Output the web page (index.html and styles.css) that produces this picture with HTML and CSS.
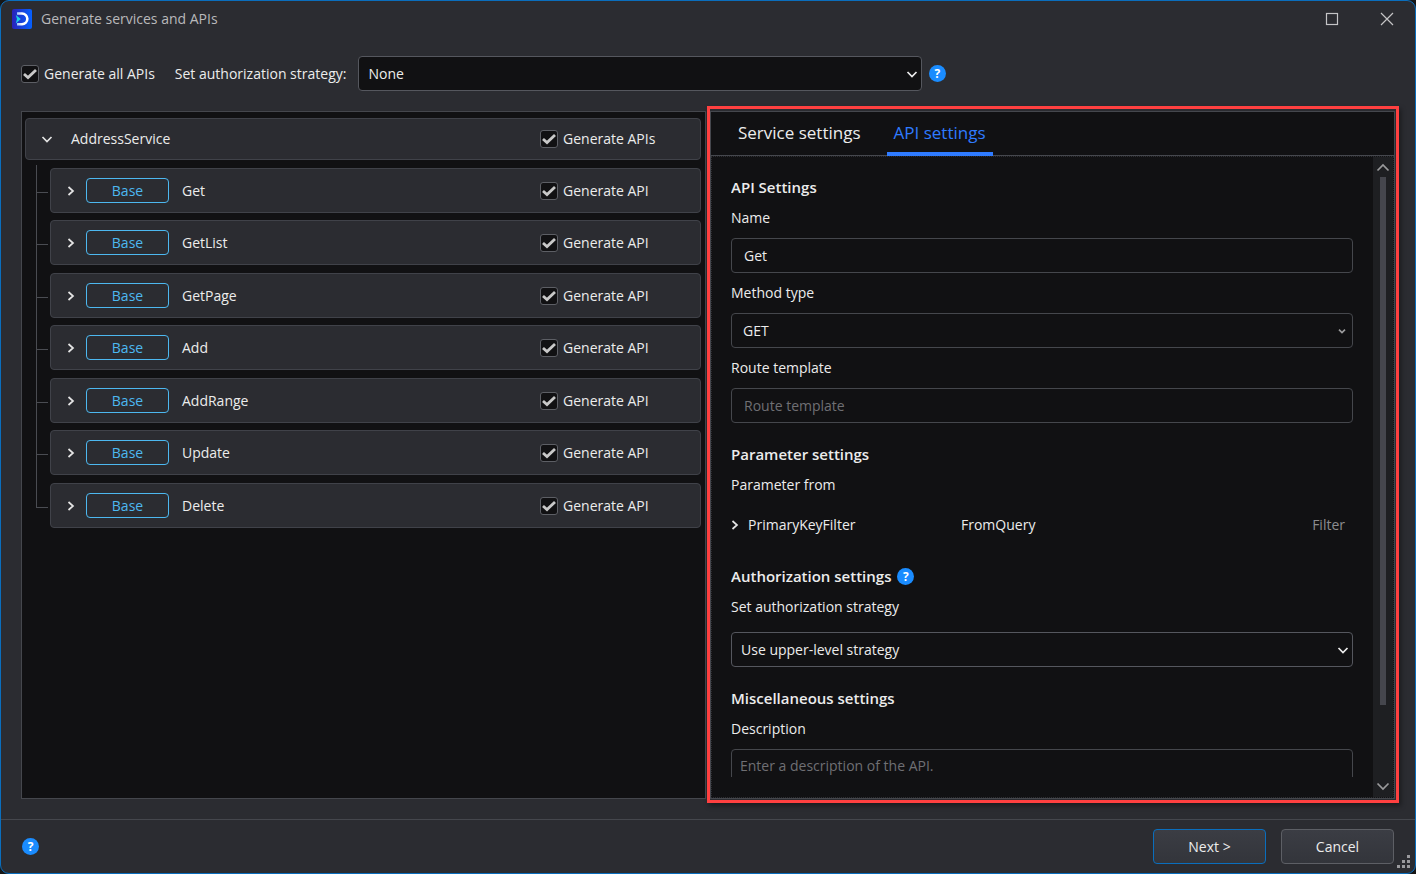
FILE: index.html
```html
<!DOCTYPE html>
<html lang="en">
<head>
    <meta charset="UTF-8">
    <title>Generate services and APIs</title>
    <meta name="viewport" content="width=device-width, initial-scale=1.0">
    <link rel="stylesheet" href="styles.css">
</head>
<body>
    <div class="window">
        <header class="titlebar">
            <svg class="logo" viewBox="0 0 20 20" fill="none">
                <defs>
                    <linearGradient id="logoBg" x1="0" y1="0" x2="20" y2="0" gradientUnits="userSpaceOnUse">
                        <stop offset="0%" stop-color="#2a22b8"/>
                        <stop offset="100%" stop-color="#0560ff"/>
                    </linearGradient>
                    <linearGradient id="logoD" x1="4" y1="0" x2="17" y2="0" gradientUnits="userSpaceOnUse">
                        <stop offset="0%" stop-color="#8fb8ff"/>
                        <stop offset="50%" stop-color="#ffffff"/>
                    </linearGradient>
                </defs>
                <rect width="20" height="20" rx="2" fill="url(#logoBg)"/>
                <path d="M5 4.500H10A5.300 5.300 0 0 1 10 15.200H5" stroke="url(#logoD)" stroke-width="2.600"/>
                <path d="M3.800 6L8.800 10L3.800 14.500L5 10Z" fill="#19d3e6"/>
            </svg>
            <h1 class="title">Generate services and APIs</h1>
            <div class="window-buttons">
                <button class="window-button" aria-label="Maximize">
                    <svg width="14" height="14" viewBox="0 0 14 14"><rect x="1.500" y="1.500" width="11" height="11" fill="none" stroke="#c4c4c6" stroke-width="1.200"/></svg>
                </button>
                <button class="window-button" aria-label="Close">
                    <svg width="14" height="14" viewBox="0 0 14 14"><path d="M1 1L13 13M13 1L1 13" stroke="#c4c4c6" stroke-width="1.200"/></svg>
                </button>
            </div>
        </header>

        <div class="toolbar">
            <label class="check"><input type="checkbox" checked>Generate all APIs</label>
            <label class="toolbar-label" for="strategy">Set authorization strategy:</label>
            <select id="strategy" class="field select toolbar-select">
                <option>None</option>
            </select>
            <button class="help" aria-label="Help">?</button>
        </div>

        <main class="main">
            <section class="tree">
                <div class="row service">
                    <button class="chevron" aria-label="Collapse">
                        <svg width="12" height="12" viewBox="0 0 12 12"><path d="M1.500 4L6 8.500L10.500 4"/></svg>
                    </button>
                    <span class="row-name">AddressService</span>
                    <label class="check"><input type="checkbox" checked>Generate APIs</label>
                </div>
                <ul class="methods">
                    <li class="row">
                        <button class="chevron" aria-label="Expand"><svg width="12" height="12" viewBox="0 0 12 12"><path d="M3.500 2L8 6L3.500 10"/></svg></button>
                        <span class="badge">Base</span>
                        <span class="row-name">Get</span>
                        <label class="check"><input type="checkbox" checked>Generate API</label>
                    </li>
                    <li class="row">
                        <button class="chevron" aria-label="Expand"><svg width="12" height="12" viewBox="0 0 12 12"><path d="M3.500 2L8 6L3.500 10"/></svg></button>
                        <span class="badge">Base</span>
                        <span class="row-name">GetList</span>
                        <label class="check"><input type="checkbox" checked>Generate API</label>
                    </li>
                    <li class="row">
                        <button class="chevron" aria-label="Expand"><svg width="12" height="12" viewBox="0 0 12 12"><path d="M3.500 2L8 6L3.500 10"/></svg></button>
                        <span class="badge">Base</span>
                        <span class="row-name">GetPage</span>
                        <label class="check"><input type="checkbox" checked>Generate API</label>
                    </li>
                    <li class="row">
                        <button class="chevron" aria-label="Expand"><svg width="12" height="12" viewBox="0 0 12 12"><path d="M3.500 2L8 6L3.500 10"/></svg></button>
                        <span class="badge">Base</span>
                        <span class="row-name">Add</span>
                        <label class="check"><input type="checkbox" checked>Generate API</label>
                    </li>
                    <li class="row">
                        <button class="chevron" aria-label="Expand"><svg width="12" height="12" viewBox="0 0 12 12"><path d="M3.500 2L8 6L3.500 10"/></svg></button>
                        <span class="badge">Base</span>
                        <span class="row-name">AddRange</span>
                        <label class="check"><input type="checkbox" checked>Generate API</label>
                    </li>
                    <li class="row">
                        <button class="chevron" aria-label="Expand"><svg width="12" height="12" viewBox="0 0 12 12"><path d="M3.500 2L8 6L3.500 10"/></svg></button>
                        <span class="badge">Base</span>
                        <span class="row-name">Update</span>
                        <label class="check"><input type="checkbox" checked>Generate API</label>
                    </li>
                    <li class="row">
                        <button class="chevron" aria-label="Expand"><svg width="12" height="12" viewBox="0 0 12 12"><path d="M3.500 2L8 6L3.500 10"/></svg></button>
                        <span class="badge">Base</span>
                        <span class="row-name">Delete</span>
                        <label class="check"><input type="checkbox" checked>Generate API</label>
                    </li>
                </ul>
            </section>

            <section class="settings">
                <nav class="tabs">
                    <button class="tab">Service settings</button>
                    <button class="tab active">API settings</button>
                </nav>
                <div class="settings-body">
                    <form class="form">
                        <div class="group">
                            <h2>API Settings</h2>
                            <label for="name">Name</label>
                            <input id="name" class="field" type="text" value="Get">
                            <label for="method">Method type</label>
                            <select id="method" class="field select select-small">
                                <option>GET</option>
                            </select>
                            <label for="route">Route template</label>
                            <input id="route" class="field" type="text" placeholder="Route template">
                        </div>

                        <div class="group">
                            <h2>Parameter settings</h2>
                            <span>Parameter from</span>
                            <div class="parameter">
                                <button type="button" class="chevron" aria-label="Expand"><svg width="12" height="12" viewBox="0 0 12 12"><path d="M3.500 2L8 6L3.500 10"/></svg></button>
                                <span class="parameter-name">PrimaryKeyFilter</span>
                                <span class="parameter-source">FromQuery</span>
                                <span class="parameter-kind">Filter</span>
                            </div>
                        </div>

                        <div class="group">
                            <h2>Authorization settings <button type="button" class="help" aria-label="Help">?</button></h2>
                            <label for="apiStrategy" class="spaced">Set authorization strategy</label>
                            <select id="apiStrategy" class="field select">
                                <option>Use upper-level strategy</option>
                            </select>
                        </div>

                        <div class="group">
                            <h2>Miscellaneous settings</h2>
                            <label for="description">Description</label>
                            <textarea id="description" class="field" placeholder="Enter a description of the API."></textarea>
                        </div>
                    </form>
                    <div class="scrollbar">
                        <svg width="14" height="9" viewBox="0 0 14 9"><path d="M1.500 7.500L7 2L12.500 7.500"/></svg>
                        <div class="scroll-track"><div class="scroll-thumb"></div></div>
                        <svg width="14" height="9" viewBox="0 0 14 9"><path d="M1.500 1.500L7 7L12.500 1.500"/></svg>
                    </div>
                </div>
            </section>
        </main>

        <footer class="footer">
            <button class="help" aria-label="Help">?</button>
            <div class="actions">
                <button class="button button-primary">Next &gt;</button>
                <button class="button">Cancel</button>
            </div>
        </footer>
        <svg class="grip" width="13" height="13" viewBox="0 0 13 13" fill="#9a9a9e">
            <rect x="10" y="0" width="3" height="3"/>
            <rect x="5" y="5" width="3" height="3"/>
            <rect x="10" y="5" width="3" height="3"/>
            <rect x="0" y="10" width="3" height="3"/>
            <rect x="5" y="10" width="3" height="3"/>
            <rect x="10" y="10" width="3" height="3"/>
        </svg>
    </div>
</body>
</html>
```

FILE: styles.css
```css
:root {
    --window-background: #2b2c31;
    --panel-background: #111113;
    --border-color: #45474d;
    --field-border: #45474c;
    --text-color: #ececec;
    --text-muted: #6f6f73;
    --accent: #2f7bff;
    --window-border: #0a6ebd;
    --highlight: #ff4040;
}

* {
    box-sizing: border-box;
    margin: 0;
    padding: 0;
}

body {
    background-color: #161616;
    color: var(--text-color);
    font-family: "Open Sans", "Noto Sans", sans-serif;
    font-size: 14px;
    line-height: 20px;
}

button, input, select, textarea {
    font: inherit;
    color: inherit;
}

button {
    border: none;
    background: none;
    cursor: pointer;
}

.window {
    position: relative;
    display: flex;
    flex-direction: column;
    height: 100vh;
    background-color: var(--window-background);
    border: 1px solid var(--window-border);
    border-radius: 9px;
}

/* Title bar */
.titlebar {
    display: flex;
    align-items: center;
    height: 36px;
    padding: 0 21px 0 11px;
}

.logo {
    width: 20px;
    height: 20px;
    margin-right: 9px;
}

.title {
    flex: 1;
    font-size: 14px;
    font-weight: 400;
    color: #b9b9bb;
}

.window-buttons {
    display: flex;
    gap: 41px;
}

.window-button {
    display: flex;
}

/* Toolbar */
.toolbar {
    display: flex;
    align-items: center;
    padding: 19px 20px 20px;
}

.toolbar-label {
    margin: 0 12px 0 20px;
}

.toolbar-select {
    width: 41%;
    margin-right: 7px;
}

.check {
    display: flex;
    align-items: center;
    gap: 5px;
}

.check input {
    appearance: none;
    width: 18px;
    height: 18px;
    border: 1px solid #5d5f65;
    border-radius: 3px;
    background-color: var(--panel-background);
}

.check input:checked {
    background-image: url("data:image/svg+xml,%3Csvg xmlns='http://www.w3.org/2000/svg' viewBox='0 0 16 16'%3E%3Cpath d='M2 8L6 11.500L14 4' fill='none' stroke='%23c8c8c8' stroke-width='2.800'/%3E%3C/svg%3E");
}

.help {
    display: inline-flex;
    align-items: center;
    justify-content: center;
    width: 17px;
    height: 17px;
    border-radius: 50%;
    background-color: #1a8cff;
    color: #fff;
    font-size: 12px;
    font-weight: 700;
    line-height: 17px;
}

/* Fields */
.field {
    height: 35px;
    padding: 0 12px;
    border: 1px solid var(--field-border);
    border-radius: 4px;
    background-color: var(--panel-background);
    outline: none;
}

.field::placeholder {
    color: var(--text-muted);
}

.select {
    appearance: none;
    padding: 0 9px;
    border-color: #55575e;
    background-image: url("data:image/svg+xml,%3Csvg xmlns='http://www.w3.org/2000/svg' viewBox='0 0 12 12'%3E%3Cpath d='M1.500 4L6 8.500L10.500 4' fill='none' stroke='%23ececec' stroke-width='1.700'/%3E%3C/svg%3E");
    background-repeat: no-repeat;
    background-position: right 3px center;
    background-size: 12px 12px;
}

.select-small {
    padding: 0 11px;
    border-color: var(--field-border);
    background-image: url("data:image/svg+xml,%3Csvg xmlns='http://www.w3.org/2000/svg' viewBox='0 0 12 12'%3E%3Cpath d='M1.500 4L6 8.500L10.500 4' fill='none' stroke='%239a9a9c' stroke-width='2.500'/%3E%3C/svg%3E");
    background-position: right 6px center;
    background-size: 8px 8px;
}

/* Panels */
.main {
    display: grid;
    grid-template-columns: 1fr 1fr;
    gap: 4px;
    flex: 1;
    min-height: 0;
    padding: 0 20px 20px;
}

.tree {
    padding: 6px 4px 0 3px;
    border: 1px solid var(--border-color);
    background-color: var(--panel-background);
}

.row {
    position: relative;
    display: flex;
    align-items: center;
    height: 45px;
    padding-left: 14px;
    border: 1px solid #404249;
    border-radius: 4px;
    background-color: var(--window-background);
}

.service {
    height: 42px;
    margin-bottom: 8px;
    padding-left: 15px;
}

.row-name {
    flex: 1;
}

.service .row-name {
    margin-left: 18px;
}

.row .check {
    flex: 0 0 160px;
}

.methods {
    list-style: none;
    margin-left: 25px;
}

.methods .row {
    margin-bottom: 7px;
}

.methods .row:nth-child(even) {
    margin-bottom: 8px;
}

/* connector lines of the tree */
.methods .row::before {
    content: "";
    position: absolute;
    top: -31px;
    left: -15px;
    width: 11px;
    height: 54px;
    border-left: 1px solid #4a4c52;
    border-bottom: 1px solid #4a4c52;
}

.methods .row:first-child::before {
    top: -4px;
    height: 27px;
}

.chevron {
    display: flex;
    width: 12px;
    height: 12px;
}

.chevron path {
    fill: none;
    stroke: #e4e4e4;
    stroke-width: 1.7;
}

.badge {
    width: 83px;
    height: 25px;
    margin: 0 13px 0 9px;
    border: 1px solid #4db8f0;
    border-radius: 4px;
    color: #4db8f0;
    line-height: 23px;
    text-align: center;
}

.settings {
    position: relative;
    display: flex;
    flex-direction: column;
    min-height: 0;
    border: 1px solid var(--border-color);
    background-color: var(--panel-background);
}

/* frame drawn round the settings panel */
.settings::after {
    content: "";
    position: absolute;
    inset: -6px -5px -5px -4px;
    border: 3px solid var(--highlight);
    box-shadow: 2px 3px 5px rgba(0, 0, 0, 0.4);
    pointer-events: none;
}

.tabs {
    display: flex;
    gap: 19px;
    height: 44px;
    padding-left: 20px;
    border-bottom: 1px solid var(--border-color);
}

.tab {
    padding: 2px 7px 0;
    font-size: 17px;
    border-bottom: 4px solid transparent;
}

.tab.active {
    color: var(--accent);
    border-bottom-color: var(--accent);
    margin-bottom: -1px;
}

.settings-body {
    display: flex;
    flex: 1;
    min-height: 0;
    border: 1px dotted #2c2d31;
}

.form {
    display: flex;
    flex-direction: column;
    gap: 21px;
    flex: 1;
    margin: 20px 20px 20px 19px;
    overflow: hidden;
}

.group {
    display: flex;
    flex-direction: column;
    flex-shrink: 0;
    gap: 10px;
}

.group h2 {
    display: flex;
    align-items: center;
    gap: 6px;
    margin-bottom: 1px;
    font-size: 15px;
    font-weight: 600;
    line-height: 20px;
}

.group .spaced {
    margin-bottom: 5px;
}

.group textarea {
    height: 80px;
    padding: 6px 8px;
    resize: none;
}

.parameter {
    display: grid;
    grid-template-columns: 17px 213px 1fr auto;
    align-items: center;
    height: 40px;
    padding-right: 8px;
}

.parameter .chevron {
    margin-left: -2px;
}

.parameter-kind {
    color: #8c8c8f;
}

.scrollbar {
    display: flex;
    flex-direction: column;
    align-items: center;
    gap: 5px;
    width: 20px;
    padding: 6px 0;
    background-color: #1e1f22;
}

.scrollbar path {
    fill: none;
    stroke: #9a9a9c;
    stroke-width: 1.7;
}

.scroll-track {
    flex: 1;
    width: 6px;
}

.scroll-thumb {
    height: 88%;
    background-color: #45464d;
}

/* Footer */
.footer {
    display: flex;
    align-items: center;
    justify-content: space-between;
    padding: 9px 21px;
    border-top: 1px solid var(--border-color);
}

.actions {
    display: flex;
    gap: 15px;
}

.button {
    width: 113px;
    height: 35px;
    border: 1px solid #5d5f65;
    border-radius: 4px;
    background: linear-gradient(#3b3d44, #33353b);
}

.button-primary {
    border-color: var(--window-border);
}

.grip {
    position: absolute;
    right: 5px;
    bottom: 5px;
}
```
